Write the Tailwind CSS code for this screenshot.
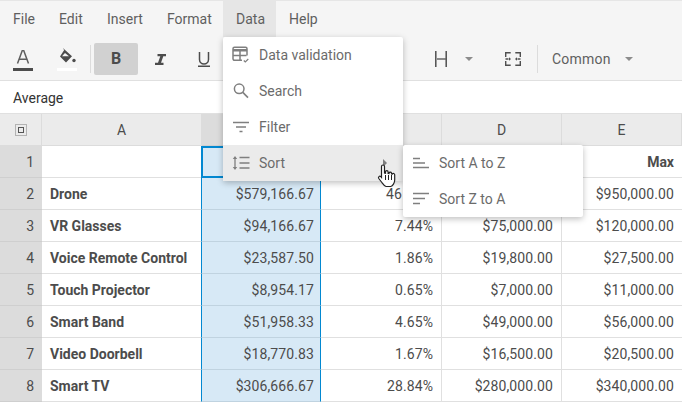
<!DOCTYPE html>
<html>
<head>
<meta charset="utf-8">
<script src="https://cdn.jsdelivr.net/npm/@tailwindcss/browser@4"></script>
</head>
<body class="m-0 overflow-hidden bg-white">
<div class="relative w-[682px] h-[402px] overflow-hidden font-['Roboto',sans-serif] text-[14px] text-[#4c4c4c]">
  <!-- menu bar -->
  <div class="h-[37px] bg-[#f5f5f5] flex border-t border-[#e6e6e6] pl-[1px] text-[#5f5f5f]">
    <div class="w-[45px] pl-[12px] leading-[36px]">File</div>
    <div class="w-[49px] pl-[13px] leading-[36px]">Edit</div>
    <div class="w-[60px] pl-[12px] leading-[36px]">Insert</div>
    <div class="w-[68px] pl-[12px] leading-[36px]">Format</div>
    <div class="w-[53px] pl-[13px] leading-[36px] bg-[#e6e6e6]">Data</div>
    <div class="w-[52px] pl-[13px] leading-[36px]">Help</div>
  </div>
  <!-- toolbar -->
  <div class="h-[44px] bg-[#f5f5f5] border-b border-[#e0e0e0] flex items-center text-[#5f5f5f]">
    <div class="w-[90px] h-full relative">
      <svg class="absolute left-[13px] top-[13px]" width="20" height="21" viewBox="0 0 20 21"><path d="M4.500 13.500 9.300.5h1.400l4.800 13M6.300 9.300h7.400" fill="none" stroke="#5f5f5f" stroke-width="1.500"/><rect y="18" width="20" height="3" fill="#4c4c4c"/></svg>
      <svg class="absolute left-[57px] top-[11px]" width="20" height="23" viewBox="0 0 20 23"><path d="M6 .5 7.200 2 3 8.500l6 6 6-6.300L7.500 1.500 6.500.5z" fill="#4c4c4c"/><path d="M5 8.300 8 5l4 3.300z" fill="#f5f5f5"/><circle cx="17" cy="12.500" r="1.700" fill="#4c4c4c"/><rect y="20" width="20" height="3" fill="#fff"/></svg>
    </div>
    <div class="w-[1px] h-[28px] bg-[#dcdcdc] mr-[3px] mt-[1px]"></div>
    <div class="w-[44px] h-[32px] rounded-[2px] bg-[#d1d1d1] flex items-center justify-center font-bold text-[#4c4c4c] text-[16px] mt-[1px]">B</div>
    <div class="w-[44px] h-[32px] flex items-center justify-center mt-[1px] pt-[1px]">
      <svg width="11" height="11" viewBox="0 0 11 11"><path d="M2.500 0H11v2.200H8.300L6 8.800h2.500V11H0V8.800h3L5.300 2.200H2.500z" fill="#4c4c4c"/></svg>
    </div>
    <div class="w-[44px] h-[32px] flex items-center justify-center mt-[1px]">
      <svg width="12" height="15" viewBox="0 0 12 15"><path d="M1.500 0v7.500a4.500 4.500 0 0 0 9 0V0" fill="none" stroke="#4c4c4c" stroke-width="1.500"/><rect y="13.500" width="12" height="1.500" fill="#4c4c4c"/></svg>
    </div>
    <div class="w-[209px]"></div>
    <div class="w-[70px] flex items-center">
      <svg width="12" height="16" viewBox="0 0 12 16"><path d="M.8 0v16M11.200 0v16" fill="none" stroke="#4f4f4f" stroke-width="1.500"/><path d="M2 8h9" stroke="#666" stroke-width="1.500"/></svg>
      <div class="ml-[18px] mt-[1px] w-0 h-0 border-x-[4px] border-x-transparent border-t-[4px] border-t-[#8c8c8c]"></div>
    </div>
    <div class="w-[32px] flex items-center">
      <svg width="16" height="14" viewBox="0 0 16 14"><path d="M.7 5V.7h5M10.300.7h5V5M.7 9v4.300h5M10.300 13.300h5V9M.5 7h3M12.500 7h3" fill="none" stroke="#4f4f4f" stroke-width="1.400"/><path d="M4 5.200 6 7 4 8.800zM12 5.200 10 7l2 1.800z" fill="#4f4f4f"/></svg>
    </div>
    <div class="w-[1px] h-[28px] bg-[#dcdcdc] mt-[1px]"></div>
    <div class="w-[144px] flex items-center pl-[14px] pt-[1px]">
      <span class="tracking-[0.2px]">Common</span>
      <div class="ml-[14px] w-0 h-0 border-x-[4px] border-x-transparent border-t-[4px] border-t-[#8c8c8c]"></div>
    </div>
  </div>
  <!-- formula bar -->
  <div class="h-[33px] bg-white border-b border-[#e0e0e0] pl-[13px] pt-[1px] leading-[32px] text-[#333]">Average</div>
  <!-- sheet -->
  <div class="grid grid-cols-[42px_160px_119px_121px_120px_120px] grid-rows-[32px_repeat(8,32px)] text-[#4c4c4c]">
    <div class="bg-[#ebebeb] border-r border-b border-[#dcdcdc] flex items-center justify-center">
      <svg width="12" height="12" viewBox="0 0 12 12"><rect x=".5" y=".5" width="11" height="11" fill="none" stroke="#7a7a7a" stroke-dasharray="1 1"/><rect x="3.500" y="3.500" width="5" height="5" fill="none" stroke="#555"/></svg>
    </div>
    <div class="bg-[#ebebeb] border-r border-b border-[#dcdcdc] flex items-center justify-center pt-[2px]">A</div>
    <div class="bg-[#dcdcdc] border-r border-b border-[#d0d0d0]"></div>
    <div class="bg-[#ebebeb] border-r border-b border-[#dcdcdc]"></div>
    <div class="bg-[#ebebeb] border-r border-b border-[#dcdcdc] flex items-center justify-center pt-[2px]">D</div>
    <div class="bg-[#ebebeb] border-r border-b border-[#dcdcdc] flex items-center justify-center pt-[2px]">E</div>

    <div class="bg-[#dcdcdc] border-b border-[#cfcfcf] flex items-center justify-end pr-[8px] pt-[1px]">1</div>
    <div class="border-r border-b border-[#e0e0e0]"></div>
    <div class="bg-[#d7e9f6] border-2 border-[#0288d1] -ml-[1px]"></div>
    <div class="border-r border-b border-[#e0e0e0]"></div>
    <div class="border-r border-b border-[#e0e0e0]"></div>
    <div class="border-b border-[#e0e0e0] flex items-center justify-end pr-[8px] pt-[1px] font-bold">Max</div>

    <div class="bg-[#dcdcdc] border-b border-[#cfcfcf] flex items-center justify-end pr-[8px] pt-[1px]">2</div>
    <div class="border-r border-b border-[#e0e0e0] flex items-center pl-[8px] pt-[1px] font-bold">Drone</div>
    <div class="bg-[#d7e9f6] border-x border-x-[#0288d1] border-b border-b-[#c0d3e0] -ml-[1px] flex items-center justify-end pr-[6px] pt-[1px] tracking-[0.1px]">$579,166.67</div>
    <div class="border-r border-b border-[#e0e0e0] flex items-center justify-start pl-[65px] pt-[1px] tracking-[0.1px]">46</div>
    <div class="border-r border-b border-[#e0e0e0]"></div>
    <div class="border-b border-[#e0e0e0] flex items-center justify-end pr-[8px] pt-[1px] tracking-[0.1px]">$950,000.00</div>

    <div class="bg-[#dcdcdc] border-b border-[#cfcfcf] flex items-center justify-end pr-[8px] pt-[1px]">3</div>
    <div class="border-r border-b border-[#e0e0e0] flex items-center pl-[8px] pt-[1px] font-bold">VR Glasses</div>
    <div class="bg-[#d7e9f6] border-x border-x-[#0288d1] border-b border-b-[#c0d3e0] -ml-[1px] flex items-center justify-end pr-[6px] pt-[1px] tracking-[0.1px]">$94,166.67</div>
    <div class="border-r border-b border-[#e0e0e0] flex items-center justify-end pr-[8px] pt-[1px] tracking-[0.1px]">7.44%</div>
    <div class="border-r border-b border-[#e0e0e0] flex items-center justify-end pr-[8px] pt-[1px] tracking-[0.1px]">$75,000.00</div>
    <div class="border-b border-[#e0e0e0] flex items-center justify-end pr-[8px] pt-[1px] tracking-[0.1px]">$120,000.00</div>

    <div class="bg-[#dcdcdc] border-b border-[#cfcfcf] flex items-center justify-end pr-[8px] pt-[1px]">4</div>
    <div class="border-r border-b border-[#e0e0e0] flex items-center pl-[8px] pt-[1px] font-bold">Voice Remote Control</div>
    <div class="bg-[#d7e9f6] border-x border-x-[#0288d1] border-b border-b-[#c0d3e0] -ml-[1px] flex items-center justify-end pr-[6px] pt-[1px] tracking-[0.1px]">$23,587.50</div>
    <div class="border-r border-b border-[#e0e0e0] flex items-center justify-end pr-[8px] pt-[1px] tracking-[0.1px]">1.86%</div>
    <div class="border-r border-b border-[#e0e0e0] flex items-center justify-end pr-[8px] pt-[1px] tracking-[0.1px]">$19,800.00</div>
    <div class="border-b border-[#e0e0e0] flex items-center justify-end pr-[8px] pt-[1px] tracking-[0.1px]">$27,500.00</div>

    <div class="bg-[#dcdcdc] border-b border-[#cfcfcf] flex items-center justify-end pr-[8px] pt-[1px]">5</div>
    <div class="border-r border-b border-[#e0e0e0] flex items-center pl-[8px] pt-[1px] font-bold">Touch Projector</div>
    <div class="bg-[#d7e9f6] border-x border-x-[#0288d1] border-b border-b-[#c0d3e0] -ml-[1px] flex items-center justify-end pr-[6px] pt-[1px] tracking-[0.1px]">$8,954.17</div>
    <div class="border-r border-b border-[#e0e0e0] flex items-center justify-end pr-[8px] pt-[1px] tracking-[0.1px]">0.65%</div>
    <div class="border-r border-b border-[#e0e0e0] flex items-center justify-end pr-[8px] pt-[1px] tracking-[0.1px]">$7,000.00</div>
    <div class="border-b border-[#e0e0e0] flex items-center justify-end pr-[8px] pt-[1px] tracking-[0.1px]">$11,000.00</div>

    <div class="bg-[#dcdcdc] border-b border-[#cfcfcf] flex items-center justify-end pr-[8px] pt-[1px]">6</div>
    <div class="border-r border-b border-[#e0e0e0] flex items-center pl-[8px] pt-[1px] font-bold">Smart Band</div>
    <div class="bg-[#d7e9f6] border-x border-x-[#0288d1] border-b border-b-[#c0d3e0] -ml-[1px] flex items-center justify-end pr-[6px] pt-[1px] tracking-[0.1px]">$51,958.33</div>
    <div class="border-r border-b border-[#e0e0e0] flex items-center justify-end pr-[8px] pt-[1px] tracking-[0.1px]">4.65%</div>
    <div class="border-r border-b border-[#e0e0e0] flex items-center justify-end pr-[8px] pt-[1px] tracking-[0.1px]">$49,000.00</div>
    <div class="border-b border-[#e0e0e0] flex items-center justify-end pr-[8px] pt-[1px] tracking-[0.1px]">$56,000.00</div>

    <div class="bg-[#dcdcdc] border-b border-[#cfcfcf] flex items-center justify-end pr-[8px] pt-[1px]">7</div>
    <div class="border-r border-b border-[#e0e0e0] flex items-center pl-[8px] pt-[1px] font-bold">Video Doorbell</div>
    <div class="bg-[#d7e9f6] border-x border-x-[#0288d1] border-b border-b-[#c0d3e0] -ml-[1px] flex items-center justify-end pr-[6px] pt-[1px] tracking-[0.1px]">$18,770.83</div>
    <div class="border-r border-b border-[#e0e0e0] flex items-center justify-end pr-[8px] pt-[1px] tracking-[0.1px]">1.67%</div>
    <div class="border-r border-b border-[#e0e0e0] flex items-center justify-end pr-[8px] pt-[1px] tracking-[0.1px]">$16,500.00</div>
    <div class="border-b border-[#e0e0e0] flex items-center justify-end pr-[8px] pt-[1px] tracking-[0.1px]">$20,500.00</div>

    <div class="bg-[#dcdcdc] border-b border-[#cfcfcf] flex items-center justify-end pr-[8px] pt-[1px]">8</div>
    <div class="border-r border-b border-[#e0e0e0] flex items-center pl-[8px] pt-[1px] font-bold">Smart TV</div>
    <div class="bg-[#d7e9f6] border-x border-x-[#0288d1] border-b border-b-[#c0d3e0] -ml-[1px] flex items-center justify-end pr-[6px] pt-[1px] tracking-[0.1px]">$306,666.67</div>
    <div class="border-r border-b border-[#e0e0e0] flex items-center justify-end pr-[8px] pt-[1px] tracking-[0.1px]">28.84%</div>
    <div class="border-r border-b border-[#e0e0e0] flex items-center justify-end pr-[8px] pt-[1px] tracking-[0.1px]">$280,000.00</div>
    <div class="border-b border-[#e0e0e0] flex items-center justify-end pr-[8px] pt-[1px] tracking-[0.1px]">$340,000.00</div>
  </div>

  <!-- Data menu -->
  <div class="absolute left-[223px] top-[37px] w-[180px] h-[144px] bg-white rounded-[2px] shadow-[0_2px_6px_rgba(0,0,0,0.25)] text-[#6b6b6b]">
    <div class="h-[36px] flex items-center pl-[9px]">
      <svg class="shrink-0" width="18" height="18" viewBox="0 0 18 18"><path d="M10 14.300H2.500a1.500 1.500 0 0 1-1.500-1.500V2.700c0-.8.700-1.500 1.500-1.500h11c.8 0 1.500.7 1.500 1.500v6.800" fill="none" stroke="#7f7f7f" stroke-width="1.500"/><path d="M1 3h14v2.500H1z" fill="#7f7f7f"/><path d="M1 9.500h13.500M8 5v9" stroke="#7f7f7f" stroke-width="1.500" fill="none"/><path d="M11.800 14.500l1.500 1.500 3-3" fill="none" stroke="#7f7f7f" stroke-width="1.200"/></svg>
      <span class="ml-[9px]">Data validation</span>
    </div>
    <div class="h-[36px] flex items-center pl-[9px]">
      <svg class="shrink-0" width="18" height="18" viewBox="0 0 18 18"><circle cx="7.200" cy="6.800" r="4.800" fill="none" stroke="#7f7f7f" stroke-width="1.500"/><path d="M10.800 10.400l5.200 5.200" stroke="#7f7f7f" stroke-width="1.600"/></svg>
      <span class="ml-[9px]">Search</span>
    </div>
    <div class="h-[36px] flex items-center pl-[9px]">
      <svg class="shrink-0" width="18" height="18" viewBox="0 0 18 18"><path d="M1 4.500h16M4 9h10M7.500 13.500h3" stroke="#7f7f7f" stroke-width="1.400" fill="none"/></svg>
      <span class="ml-[9px]">Filter</span>
    </div>
    <div class="h-[36px] flex items-center pl-[9px] bg-[#ebebeb] relative">
      <svg class="shrink-0" width="18" height="18" viewBox="0 0 18 18"><path d="M3 3.500v11" stroke="#7f7f7f" stroke-width="1.300"/><path d="M.8 5 3 2l2.200 3zM.8 13 3 16l2.200-3z" fill="#7f7f7f"/><path d="M7.500 3.500h10M7.500 9h10M7.500 14h10" stroke="#7f7f7f" stroke-width="1.400"/></svg>
      <span class="ml-[9px]">Sort</span>
      <div class="absolute left-[160px] top-[14px] w-0 h-0 border-y-[4px] border-y-transparent border-l-[4px] border-l-[#7f7f7f]"></div>
    </div>
  </div>
  <!-- Sort submenu -->
  <div class="absolute left-[403px] top-[145px] w-[180px] h-[72px] bg-white rounded-[2px] shadow-[0_2px_6px_rgba(0,0,0,0.25)] text-[#6b6b6b]">
    <div class="h-[36px] flex items-center pl-[9px]">
      <svg class="shrink-0" width="18" height="18" viewBox="0 0 18 18"><path d="M1 4.500h7M1 9h12M1 13.500h16" stroke="#7f7f7f" stroke-width="1.400"/></svg>
      <span class="ml-[9px]">Sort A to Z</span>
    </div>
    <div class="h-[36px] flex items-center pl-[9px]">
      <svg class="shrink-0" width="18" height="18" viewBox="0 0 18 18"><path d="M1 3.500h16M1 8.500h12M1 13.500h7" stroke="#7f7f7f" stroke-width="1.400"/></svg>
      <span class="ml-[9px]">Sort Z to A</span>
    </div>
  </div>
  <!-- cursor -->
  <svg class="absolute left-[377px] top-[164px]" width="20" height="24" viewBox="0 0 20 24"><path d="M4.500 2.500a1.500 1.500 0 0 1 3 0V9l1 .2V8a1.300 1.300 0 0 1 2.600 0v1.500l.9.1V9a1.300 1.300 0 0 1 2.500 0v1l.8.1a1.300 1.300 0 0 1 2.400.7V16c0 3-2 6-4 6.500H9c-2-.5-3-2.500-4.500-4.500L1.800 14.500c-1-1.500.8-3 2-1.800l.7.8z" fill="#fff" stroke="#222" stroke-width="1.200"/><path d="M8.500 11v5M11.500 11v5M14.500 11v5" stroke="#222" stroke-width="1"/></svg>
</div>
</body>
</html>
